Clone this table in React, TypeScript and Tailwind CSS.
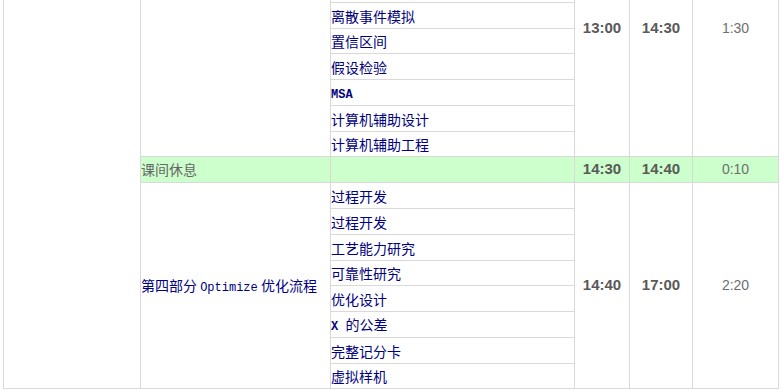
const upper = [
  { topic: "", h: "h-[26px]" },
  { topic: "", h: "h-[26px]" },
  { topic: "", h: "h-[26px]" },
  { topic: "", h: "h-[25px]" },
  { topic: "离散事件模拟", h: "h-[26px]" },
  { topic: "置信区间", h: "h-[25px]" },
  { topic: "假设检验", h: "h-[26px]" },
  { topic: "MSA", h: "h-[26px]", latin: true },
  { topic: "计算机辅助设计", h: "h-[26px]" },
  { topic: "计算机辅助工程", h: "h-[25px]" },
];

const lower = [
  { topic: "过程开发", h: "h-[26px]" },
  { topic: "过程开发", h: "h-[26px]" },
  { topic: "工艺能力研究", h: "h-[26px]" },
  { topic: "可靠性研究", h: "h-[25px]" },
  { topic: "优化设计", h: "h-[26px]" },
  { topic: "X 的公差", h: "h-[26px]", x: true },
  { topic: "完整记分卡", h: "h-[26px]" },
  { topic: "虚拟样机", h: "h-[25px]" },
];

const cell = "border border-[#d9d9d9] p-0 align-middle";
const topicCls = `${cell} text-[14px] leading-none text-[#000080] text-left`;
const boldTime = `${cell} text-center font-bold text-[15px] text-[#595959] font-['Liberation_Sans',sans-serif]`;
const normTime = `${cell} text-center text-[14px] text-[#6e6e6e] font-['Liberation_Sans',sans-serif]`;

function Mono({ children }: { children: string }) {
  return <span className="font-['Liberation_Mono',monospace] text-[12px] font-bold">{children}</span>;
}

function Topic({ t }: { t: { topic: string; latin?: boolean; x?: boolean } }) {
  if (t.latin) return <Mono>{t.topic}</Mono>;
  if (t.x)
    return (
      <>
        <Mono>X </Mono>的公差
      </>
    );
  return <>{t.topic}</>;
}

export default function App() {
  return (
    <div className="h-[391px] w-[783px] overflow-hidden bg-white font-['Noto_Sans_CJK_SC','Noto_Sans',sans-serif]">
      <table className="ml-[3px] mt-[-101px] border-collapse table-fixed w-[775px]">
        <colgroup>
          <col className="w-[137px]" />
          <col className="w-[190px]" />
          <col className="w-[244px]" />
          <col className="w-[55px]" />
          <col className="w-[63px]" />
          <col className="w-[86px]" />
        </colgroup>
        <tbody>
          {upper.map((t, i) => (
            <tr key={`u${i}`} className={t.h}>
              {i === 0 && <td rowSpan={upper.length + 1 + lower.length} className={cell} />}
              {i === 0 && <td rowSpan={upper.length} className={cell} />}
              <td className={topicCls}>
                <Topic t={t} />
              </td>
              {i === 0 && (
                <>
                  <td rowSpan={upper.length} className={boldTime}>13:00</td>
                  <td rowSpan={upper.length} className={boldTime}>14:30</td>
                  <td rowSpan={upper.length} className={normTime}>1:30</td>
                </>
              )}
            </tr>
          ))}
          <tr className="h-[26px] bg-[#ccffcc]">
            <td className={`${cell} text-[14px] text-[#666666] text-left`}>课间休息</td>
            <td className={cell} />
            <td className={boldTime}>14:30</td>
            <td className={boldTime}>14:40</td>
            <td className={normTime}>0:10</td>
          </tr>
          {lower.map((t, i) => (
            <tr key={`l${i}`} className={t.h}>
              {i === 0 && (
                <td rowSpan={lower.length} className={`${cell} text-[14px] text-[#000080] text-left whitespace-nowrap`}>
                  第四部分 <span className="font-['Liberation_Mono',monospace] text-[12px]">Optimize</span> 优化流程
                </td>
              )}
              <td className={topicCls}>
                <Topic t={t} />
              </td>
              {i === 0 && (
                <>
                  <td rowSpan={lower.length} className={boldTime}>14:40</td>
                  <td rowSpan={lower.length} className={boldTime}>17:00</td>
                  <td rowSpan={lower.length} className={normTime}>2:20</td>
                </>
              )}
            </tr>
          ))}
        </tbody>
      </table>
    </div>
  );
}
